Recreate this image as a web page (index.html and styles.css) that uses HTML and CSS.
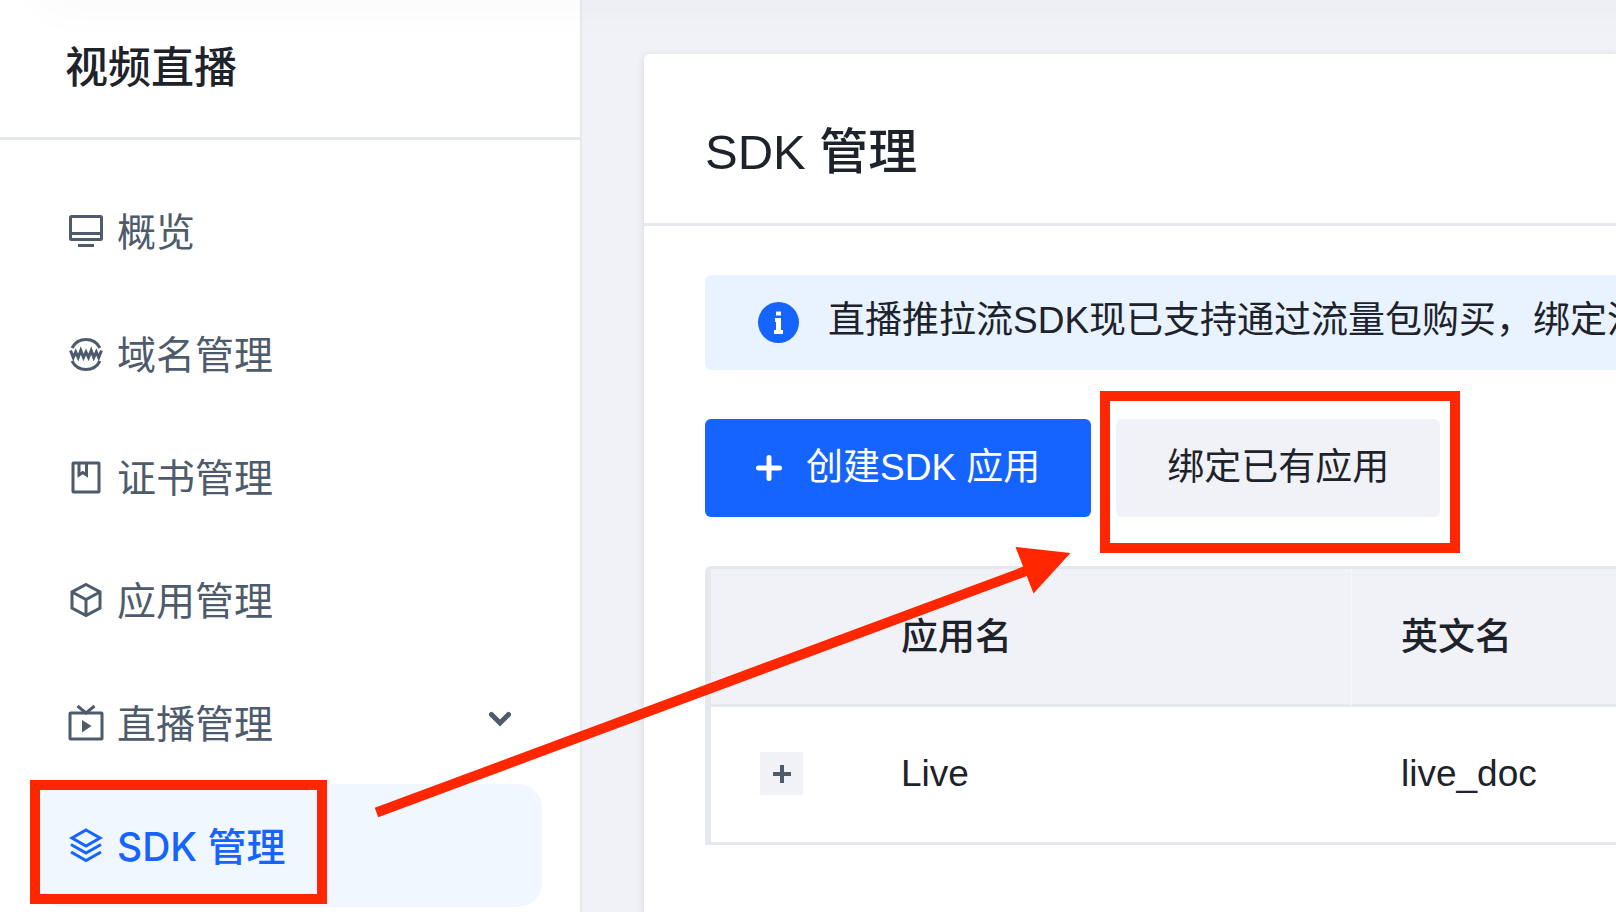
FILE: index.html
```
<!DOCTYPE html>
<html lang="zh-CN">
<head>
<meta charset="utf-8">
<title>SDK 管理</title>
<link rel="stylesheet" href="styles.css">
</head>
<body>
<div class="topbar-shadow"></div>
<div class="layout">
  <aside class="sidebar">
    <h2 class="sidebar-title">视频直播</h2>
    <nav class="menu">
      <a class="menu-item" href="#">
        <svg class="icon" viewBox="0 0 38 38"><rect x="3.5" y="4.5" width="31" height="23" rx="1"/><path d="M4 21.5H34M11 33.5H27"/></svg>
        <span>概览</span>
      </a>
      <a class="menu-item" href="#">
        <svg class="icon" viewBox="0 0 38 38"><path d="M5 13A15.8 15.8 0 0 1 33 13M5 26A15.8 15.8 0 0 0 33 26"/><path d="M3.500 15.500L6.300 22.500L8.700 17L11.200 22.500L13.800 15.500L16.500 22.500L19 17L21.500 22.500L24.200 15.500L26.800 22.500L29.300 17L31.700 22.500L34.500 15.500"/></svg>
        <span>域名管理</span>
      </a>
      <a class="menu-item" href="#">
        <svg class="icon" viewBox="0 0 38 38"><rect x="6" y="5" width="26" height="29" rx="0.5"/><path d="M12 5.500V17L15.700 14.500L19.500 17V5.500"/></svg>
        <span>证书管理</span>
      </a>
      <a class="menu-item" href="#">
        <svg class="icon" viewBox="0 0 38 38"><path d="M19 3.5L33 11V27L19 34.5L5 27V11ZM5 11L19 18.5L33 11M19 18.5V34"/></svg>
        <span>应用管理</span>
      </a>
      <a class="menu-item" href="#">
        <svg class="icon" viewBox="0 0 38 38"><rect x="3" y="9" width="32" height="26" rx="0.5"/><path d="M10.500 2L19 9L27.500 2"/><path class="solid" d="M15 16L24.500 22L15 28.500Z"/></svg>
        <span>直播管理</span>
        <svg class="caret" viewBox="0 0 22 16"><path d="M2.500 3.500L11 12L19.500 3.500"/></svg>
      </a>
      <a class="menu-item active" href="#">
        <svg class="icon" viewBox="0 0 38 38"><path d="M19 3L33 11L19 19L5 11ZM4 17.500L19 26L34 17.500M4 25L19 33.500L34 25"/></svg>
        <span>SDK 管理</span>
      </a>
    </nav>
  </aside>
  <main class="content">
    <section class="card">
      <h1 class="card-title">SDK 管理</h1>
      <div class="card-body">
        <div class="alert">
          <svg class="info" viewBox="0 0 41 41"><circle cx="20.500" cy="20.500" r="20.500"/><path d="M18 9.500h5v4h-5zM17 16h6v12h2v4h-9v-4h2v-8h-1z"/></svg>
          <p class="alert-text">直播推拉流SDK现已支持通过流量包购买，绑定流</p>
        </div>
        <div class="actions">
          <button class="btn primary" type="button">
            <svg class="plus" viewBox="0 0 26 26"><path d="M13 2.500V23.500M2.500 13H23.500"/></svg>
            <span>创建SDK 应用</span>
          </button>
          <button class="btn marked" type="button">绑定已有应用</button>
        </div>
        <div class="table-wrap">
          <table class="table">
            <thead>
              <tr><th class="col-expand"></th><th class="col-name">应用名</th><th>英文名</th></tr>
            </thead>
            <tbody>
              <tr>
                <td class="col-expand"><button class="expand" type="button" aria-label="展开"><svg viewBox="0 0 20 20"><path d="M10 1V19M1 10H19"/></svg></button></td>
                <td>Live</td>
                <td>live_doc</td>
              </tr>
            </tbody>
          </table>
        </div>
      </div>
    </section>
  </main>
</div>
<svg class="arrow" viewBox="0 0 700 270"><path class="shaft" d="M6.500 263.500L660 20.500"/><path class="head" d="M700.500 4L645.500 -2L663.500 44.500Z"/></svg>
</body>
</html>
```
FILE: styles.css
```
*,
*::after { box-sizing: border-box; }

body {
  margin: 0;
  overflow: hidden;
  background: #f0f2f7;
  color: #1d222b;
  font-family: "Liberation Sans", "Noto Sans CJK SC", sans-serif;
  font-size: 37px;
  line-height: 48px;
}

.topbar-shadow {
  position: absolute;
  z-index: 2;
  top: -20px;
  left: 40px;
  right: -60px;
  height: 20px;
  box-shadow: 0 0 48px rgba(0, 0, 0, 0.05);
}

.layout {
  display: flex;
  min-height: 100vh;
}

.sidebar {
  flex: 0 0 582px;
  border-right: 2px solid #e5e8ef;
  background: #fff;
}

.sidebar-title {
  margin: 0;
  padding: 44px 65px 45px;
  border-bottom: 3px solid #e5e8ef;
  font-size: 43px;
  font-weight: 500;
  line-height: 48px;
}

.menu {
  display: grid;
  grid-auto-rows: 123px;
  padding: 29px 38px 0 39px;
}

.menu-item {
  position: relative;
  display: flex;
  align-items: center;
  gap: 12px;
  padding: 0 31px 0 28px;
  border-radius: 24px;
  color: #4e5b6c;
  font-family: "Inter", "Noto Sans CJK SC", sans-serif;
  font-size: 39px;
  text-decoration: none;
}

.menu-item span { padding-top: 3px; }

.menu-item.active {
  background: #f0f7ff;
  color: #1664ff;
}

.menu-item.active span { font-weight: 500; }

.menu-item.active::after {
  content: "";
  position: absolute;
  top: -4px;
  left: -9px;
  width: 297px;
  height: 124px;
  border: 10px solid #ff2600;
}

.icon {
  flex: none;
  width: 38px;
  height: 38px;
  fill: none;
  stroke: currentColor;
  stroke-width: 3;
}

.icon .solid {
  fill: currentColor;
  stroke: none;
}

.caret {
  width: 22px;
  height: 16px;
  margin: 0 0 8px auto;
  fill: none;
  stroke: currentColor;
  stroke-width: 5;
  stroke-linecap: round;
}

.content {
  flex: 1;
  min-width: 0;
  padding: 54px 0 0 62px;
}

.card {
  min-height: 100%;
  border-radius: 6px 0 0 0;
  background: #fff;
  box-shadow: 0 2px 8px rgba(30, 30, 60, 0.12);
}

.card-title {
  margin: 0;
  padding: 68px 61px 41px;
  border-bottom: 3px solid #e5e8ef;
  font-size: 49px;
  font-weight: 500;
  line-height: 60px;
}

.card-body { padding: 49px 0 68px 61px; }

.alert {
  display: flex;
  align-items: center;
  gap: 29px;
  height: 95px;
  padding-left: 53px;
  overflow: hidden;
  border-radius: 6px 0 0 6px;
  background: #e8f3ff;
}

.info {
  flex: none;
  width: 41px;
  height: 41px;
  fill: #1664ff;
}

.info path { fill: #fff; }

.alert-text {
  margin: 0;
  padding-bottom: 3px;
  white-space: nowrap;
}

.actions {
  display: flex;
  gap: 25px;
  margin: 49px 0;
}

.btn {
  position: relative;
  display: flex;
  align-items: center;
  gap: 24px;
  height: 98px;
  padding: 0 51px;
  border: 0;
  border-radius: 6px;
  background: #f1f2f7;
  color: inherit;
  font: inherit;
}

.btn.primary {
  background: #1664ff;
  color: #fff;
}

.btn.marked::after {
  content: "";
  position: absolute;
  inset: -28px -20px -36px -16px;
  border: 10px solid #ff2600;
}

.plus {
  width: 26px;
  height: 26px;
  fill: none;
  stroke: currentColor;
  stroke-width: 5;
  stroke-linecap: round;
}

.table-wrap {
  border: 3px solid #e5e8ef;
  border-width: 3px 0 0 3px;
  border-radius: 6px 0 0 0;
}

.table {
  width: 100%;
  border-left: 3px solid #e5e8ef;
  border-spacing: 0;
  table-layout: fixed;
}

.table th,
.table td {
  height: 138px;
  padding: 0 49px;
  border-bottom: 3px solid #e5e8ef;
  text-align: left;
  font-weight: 400;
}

.table th {
  padding-top: 2px;
  background: #f1f2f7;
  font-weight: 500;
}

.table td { padding-bottom: 2px; }

.table .col-expand { width: 141px; }

.table .col-name {
  width: 500px;
  border-right: 1px solid #f7f8fb;
}

.expand {
  display: grid;
  place-items: center;
  width: 43px;
  height: 43px;
  padding: 0;
  border: 0;
  background: #f1f2f7;
  color: #4e5b6c;
}

.expand svg {
  width: 20px;
  height: 20px;
  stroke: currentColor;
  stroke-width: 4;
}

.arrow {
  position: absolute;
  z-index: 3;
  top: 549px;
  left: 370px;
  width: 700px;
  height: 270px;
  overflow: visible;
  pointer-events: none;
}

.arrow .shaft {
  stroke: #ff2600;
  stroke-width: 10;
}

.arrow .head { fill: #ff2600; }
```
